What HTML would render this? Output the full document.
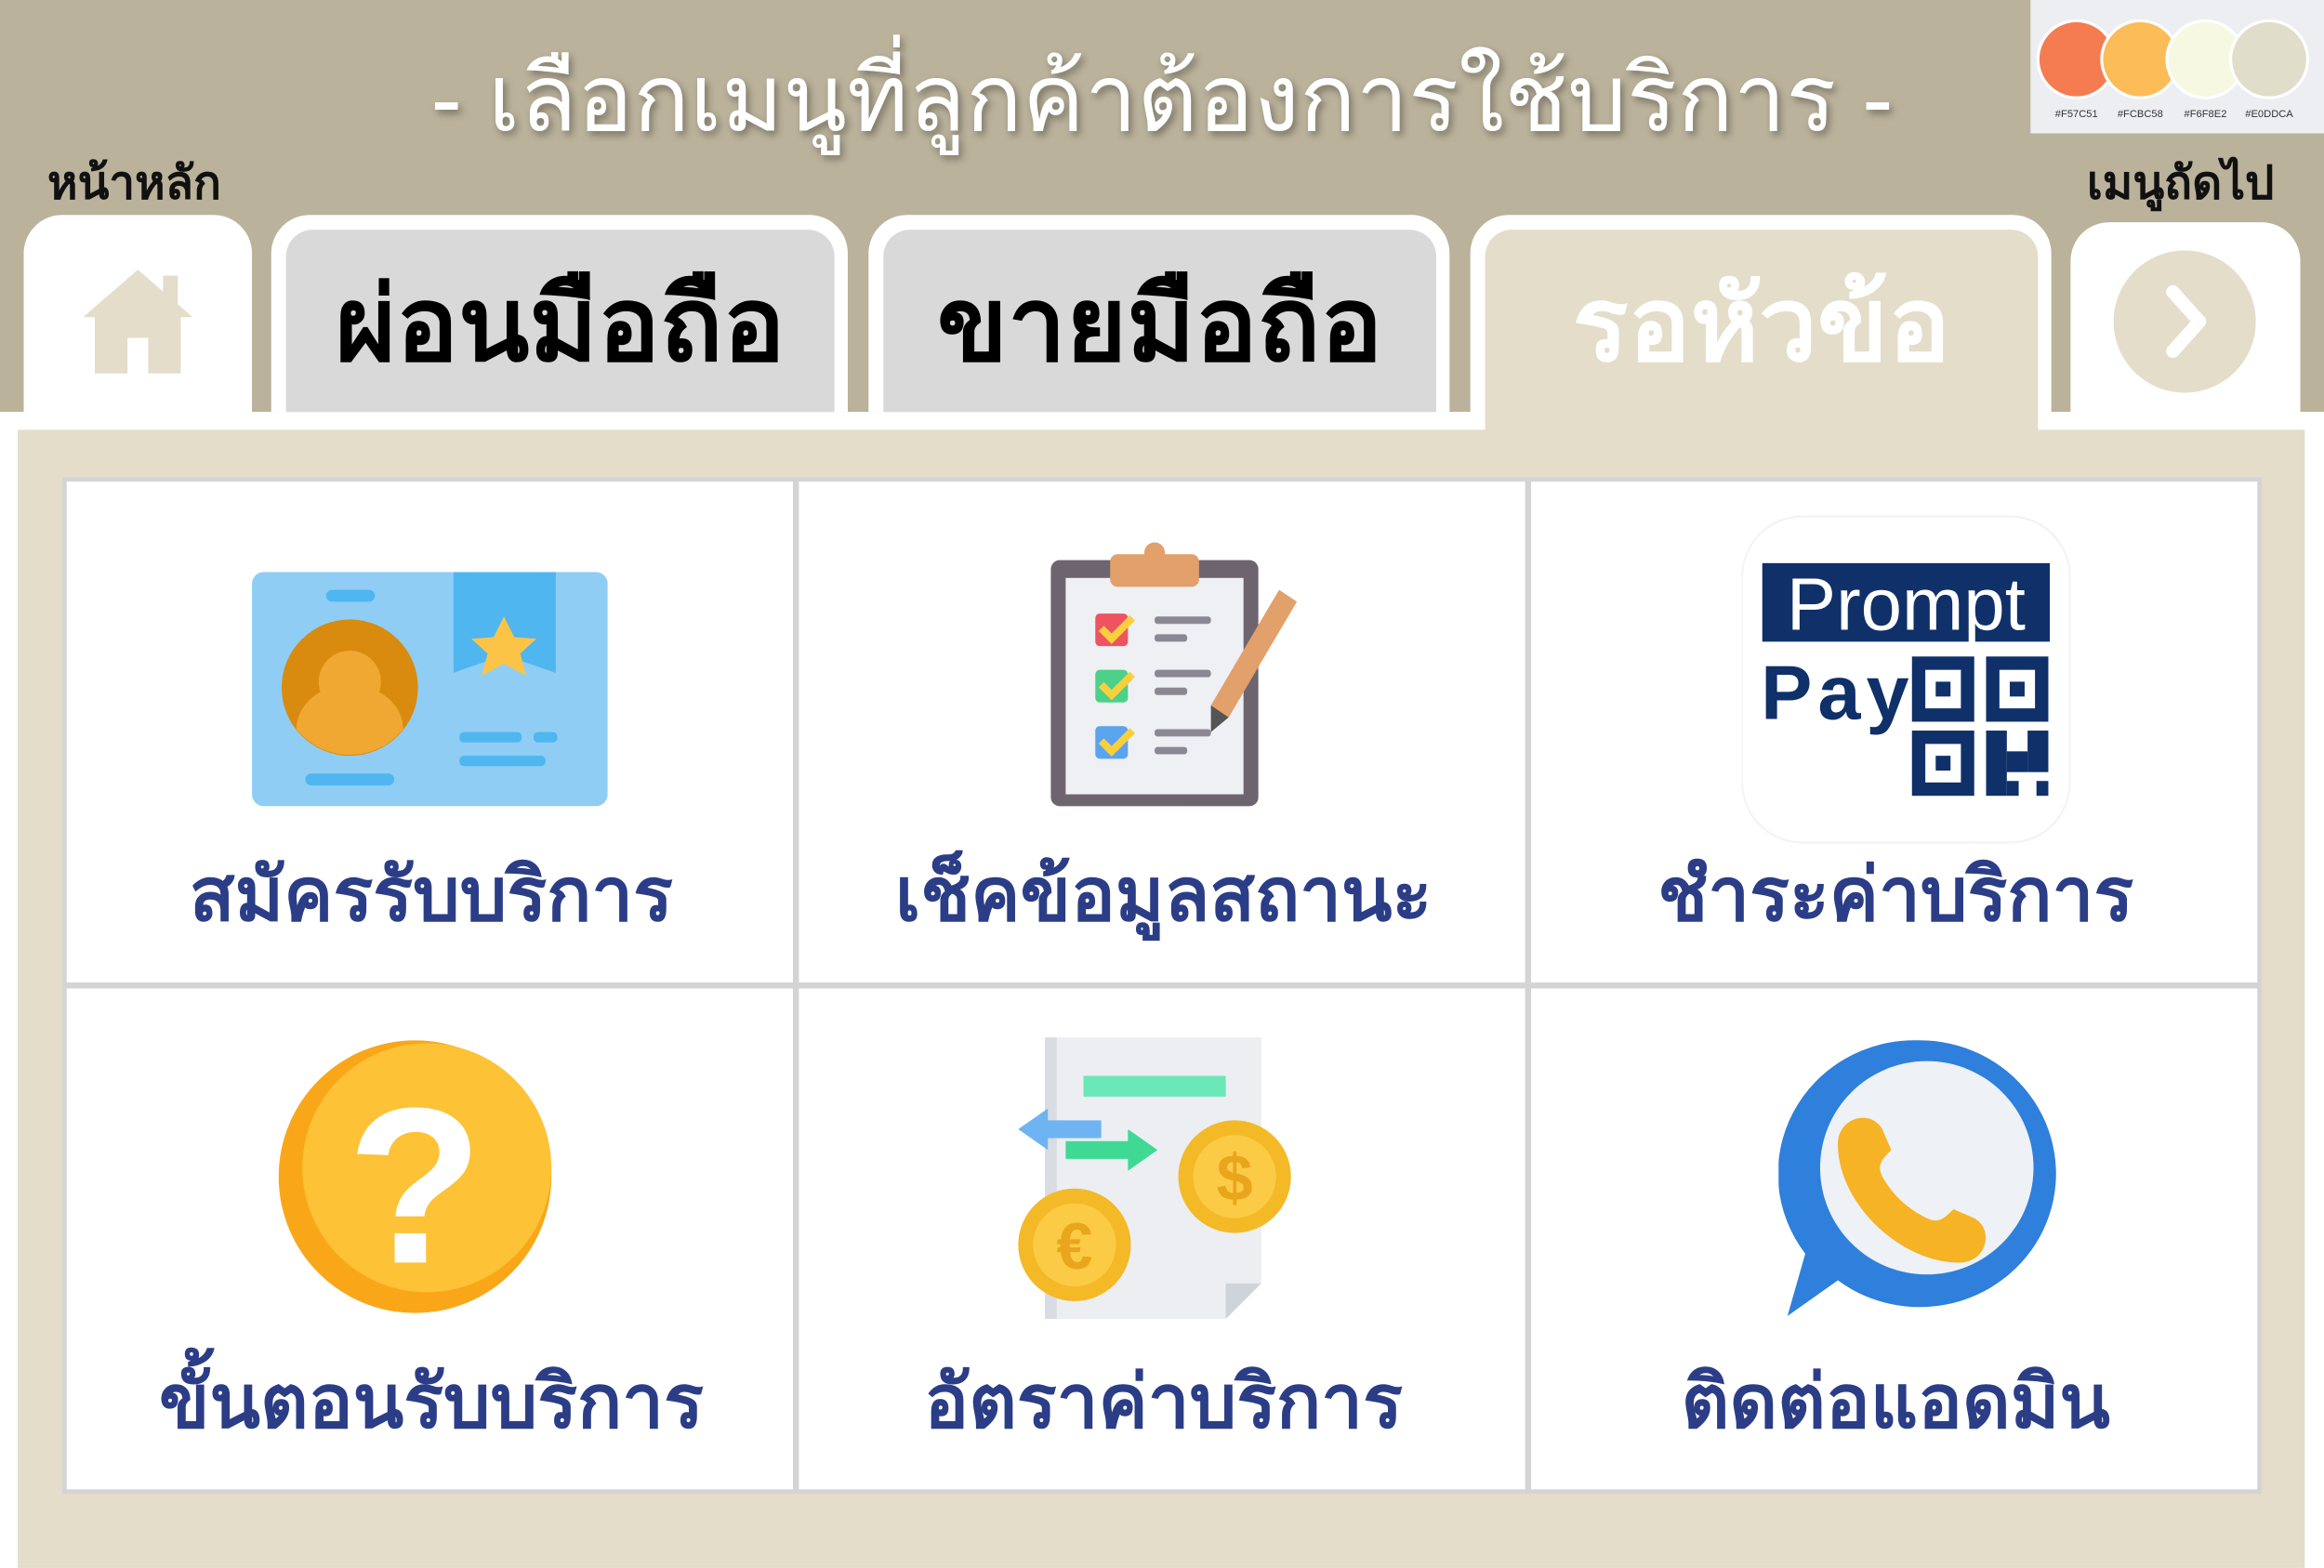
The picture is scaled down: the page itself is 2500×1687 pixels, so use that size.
<!DOCTYPE html>
<html><head><meta charset="utf-8"><style>
html,body{margin:0;padding:0;width:2500px;height:1686px;overflow:hidden;background:#fff}
#s{position:absolute;left:0;top:0;width:1568px;height:1058px;transform-origin:0 0;transform:scale(1.5944);font-family:"Liberation Sans","DejaVu Sans",sans-serif}
.a{position:absolute}
.lbl{position:absolute;font-weight:bold;color:#2b3d86;font-size:50px;text-align:center;width:494px}
.tab{font-size:70px;font-weight:bold;text-align:center;line-height:128px}
</style></head><body><div id="s">
<div class="a" style="left:0;top:0;width:1568px;height:278px;background:#bab29b"></div>
<div class="a" style="left:0;top:278px;width:1568px;height:780px;background:#fff"></div>
<div class="a" style="left:0;top:16px;width:1568px;text-align:center;font-size:63px;color:#fff;text-shadow:2px 3px 5px rgba(0,0,0,.35)">- เลือกเมนูที่ลูกค้าต้องการใช้บริการ -</div>
<div class="a" style="left:1370px;top:0;width:198px;height:90px;background:#eceef2"></div>
<svg class="a" style="left:1370px;top:0" width="198" height="90">
<circle cx="31" cy="40" r="26" fill="#F57C51" stroke="#fff" stroke-width="2"/>
<circle cx="74" cy="40" r="26" fill="#FCBC58" stroke="#fff" stroke-width="2"/>
<circle cx="118" cy="40" r="26" fill="#F6F8E2" stroke="#fff" stroke-width="2"/>
<circle cx="161" cy="40" r="26" fill="#E0DDCA" stroke="#fff" stroke-width="2"/>
<g font-size="7" fill="#333" font-family="Liberation Sans" text-anchor="middle"><text x="31" y="79">#F57C51</text><text x="74" y="79">#FCBC58</text><text x="118" y="79">#F6F8E2</text><text x="161" y="79">#E0DDCA</text></g>
</svg>
<div class="a" style="left:32px;top:98px;font-size:31px;font-weight:bold;color:#111">หน้าหลัก</div>
<div class="a" style="left:1408px;top:98px;font-size:31px;font-weight:bold;color:#111">เมนูถัดไป</div>
<div class="a" style="left:16px;top:145px;width:154px;height:145px;background:#fff;border-radius:26px 26px 0 0"></div>
<svg class="a" style="left:52px;top:178px" width="82" height="76" viewBox="0 0 82 76"><path d="M41 4 L4 36 L12 36 L12 74 L34 74 L34 50 L48 50 L48 74 L70 74 L70 36 L78 36 Z" fill="#e3ddca"/><rect x="58" y="8" width="10" height="20" fill="#e3ddca"/></svg>
<div class="a" style="left:183px;top:145px;width:389px;height:133px;background:#fff;border-radius:26px 26px 0 0"></div>
<div class="a tab" style="left:193px;top:155px;width:370px;height:123px;background:#d9d9d9;border-radius:18px 18px 0 0;color:#000">ผ่อนมือถือ</div>
<div class="a" style="left:586px;top:145px;width:392px;height:133px;background:#fff;border-radius:26px 26px 0 0"></div>
<div class="a tab" style="left:596px;top:155px;width:373px;height:123px;background:#d9d9d9;border-radius:18px 18px 0 0;color:#000">ขายมือถือ</div>
<div class="a" style="left:992px;top:145px;width:392px;height:145px;background:#fff;border-radius:26px 26px 0 0"></div>
<div class="a tab" style="left:1002px;top:155px;width:373px;height:140px;background:#e3ddca;border-radius:18px 18px 0 0;color:#fff">รอหัวข้อ</div>
<div class="a" style="left:1397px;top:150px;width:155px;height:140px;background:#fff;border-radius:26px 26px 0 0"></div>
<svg class="a" style="left:1426px;top:169px" width="96" height="96"><circle cx="48" cy="48" r="48" fill="#e3ddca"/><path d="M40 28 L58 48 L40 68" stroke="#fff" stroke-width="9" fill="none" stroke-linecap="round" stroke-linejoin="round"/></svg>
<div class="a" style="left:12px;top:290px;width:1543px;height:768px;background:#e3ddca"></div>
<div class="a" style="left:42px;top:322px;width:1484px;height:686px;background:#d4d4d4"></div>
<div class="a" style="left:45px;top:325px;width:490px;height:338px;background:#fff"></div>
<div class="a" style="left:539px;top:325px;width:490px;height:338px;background:#fff"></div>
<div class="a" style="left:1033px;top:325px;width:490px;height:338px;background:#fff"></div>
<div class="a" style="left:45px;top:667px;width:490px;height:338px;background:#fff"></div>
<div class="a" style="left:539px;top:667px;width:490px;height:338px;background:#fff"></div>
<div class="a" style="left:1033px;top:667px;width:490px;height:338px;background:#fff"></div>
<svg class="a" style="left:170px;top:386px" width="240" height="158"><rect width="240" height="158" rx="8" fill="#8fcdf5"/><path d="M136 0 H205 V68 L170 56 L136 68 Z" fill="#4fb6ef"/><path d="M170 30 l7 14 15 1 -11 10 4 15 -15 -8 -15 8 4 -15 -11 -10 15 -1z" fill="#fbc447"/><rect x="50" y="12" width="33" height="8" rx="4" fill="#4fb6ef"/><circle cx="66" cy="78" r="46" fill="#d88b0e"/><circle cx="66" cy="74" r="21" fill="#f0a832"/><path d="M30 106 a36 30 0 0 1 72 0 a46 46 0 0 1 -72 0z" fill="#f0a832"/><rect x="36" y="136" width="60" height="8" rx="4" fill="#4fb6ef"/><rect x="140" y="108" width="42" height="7" rx="3" fill="#4fb6ef"/><rect x="190" y="108" width="16" height="7" rx="3" fill="#4fb6ef"/><rect x="140" y="124" width="58" height="7" rx="3" fill="#4fb6ef"/></svg>
<svg class="a" style="left:705px;top:364px" width="175" height="182"><rect x="4" y="14" width="140" height="166" rx="6" fill="#6e6470"/><rect x="14" y="26" width="120" height="146" fill="#eef0f3"/><rect x="44" y="10" width="60" height="22" rx="5" fill="#e2a06a"/><circle cx="74" cy="9" r="7" fill="#e2a06a"/><rect x="34" y="50" width="22" height="22" rx="3" fill="#ee5460"/><rect x="34" y="88" width="22" height="22" rx="3" fill="#4cd08a"/><rect x="34" y="126" width="22" height="22" rx="3" fill="#5aa3ef"/><path d="M38 60 l7 7 14 -14 M38 98 l7 7 14 -14 M38 136 l7 7 14 -14" stroke="#f8cf3c" stroke-width="5" fill="none"/><g fill="#8b8893"><rect x="74" y="52" width="38" height="5" rx="2"/><rect x="74" y="64" width="22" height="5" rx="2"/><rect x="74" y="88" width="38" height="5" rx="2"/><rect x="74" y="100" width="22" height="5" rx="2"/><rect x="74" y="128" width="38" height="5" rx="2"/><rect x="74" y="140" width="22" height="5" rx="2"/></g><path d="M158 34 l12 8 -46 78 -12 -8z" fill="#e2a06a"/><path d="M112 112 l12 8 -12 10z" fill="#555"/></svg>
<div class="a" style="left:1176px;top:349px;width:220px;height:219px;background:#fff;border-radius:40px;box-shadow:0 0 2px #ddd"></div>
<svg class="a" style="left:1176px;top:349px" width="220" height="219"><rect x="13" y="31" width="194" height="53" fill="#0f3069"/><text x="110" y="76" text-anchor="middle" font-size="50" fill="#fff" font-family="Liberation Sans">Prompt</text><text x="12" y="136" font-size="52" font-weight="bold" fill="#0f3069" font-family="Liberation Sans" textLength="100">Pay</text><g fill="none" stroke="#0f3069" stroke-width="9"><rect x="118.5" y="98.5" width="33" height="35"/><rect x="168.5" y="98.5" width="33" height="35"/><rect x="118.5" y="148.5" width="33" height="35"/></g><g fill="#0f3069"><rect x="130" y="111" width="10" height="10"/><rect x="180" y="111" width="10" height="10"/><rect x="130" y="161" width="10" height="10"/><rect x="164" y="144" width="14" height="44"/><rect x="178" y="158" width="14" height="14"/><rect x="192" y="144" width="14" height="28"/><rect x="178" y="178" width="8" height="10"/><rect x="198" y="178" width="8" height="10"/></g></svg>
<svg class="a" style="left:184px;top:702px" width="192" height="190"><circle cx="96" cy="92" r="92" fill="#f9a719"/><circle cx="104" cy="86" r="84" fill="#fdc236"/><text x="96" y="150" text-anchor="middle" font-size="150" font-weight="bold" fill="#fff" font-family="Liberation Sans">?</text></svg>
<svg class="a" style="left:685px;top:700px" width="190" height="192"><path d="M20 0 H166 V166 L142 190 H20 Z" fill="#eceef2"/><path d="M142 190 V166 H166Z" fill="#cfd3da"/><rect x="20" y="0" width="8" height="190" fill="#d9dce2"/><rect x="46" y="26" width="96" height="14" fill="#6ae8b8"/><path d="M2 62 L22 48 V56 H58 V68 H22 V76Z" fill="#6fb4f2"/><path d="M96 76 L76 62 V70 H34 V82 H76 V90Z" fill="#3fd995"/><circle cx="148" cy="94" r="38" fill="#f4b926"/><circle cx="148" cy="94" r="28" fill="#fbcb45"/><text x="148" y="110" text-anchor="middle" font-size="44" font-weight="bold" fill="#e9a51c" font-family="Liberation Sans">$</text><circle cx="40" cy="140" r="38" fill="#f4b926"/><circle cx="40" cy="140" r="28" fill="#fbcb45"/><text x="40" y="156" text-anchor="middle" font-size="44" font-weight="bold" fill="#e9a51c" font-family="Liberation Sans">€</text></svg>
<svg class="a" style="left:1200px;top:700px" width="188" height="190"><path d="M94 2 A92 90 0 1 1 40 164 L6 188 L18 146 A92 90 0 0 1 94 2Z" fill="#2f7fdc"/><circle cx="100" cy="88" r="72" fill="#eef1f5"/><path d="M40 72 c0 -18 22 -24 30 -10 l6 14 c-6 6 -10 10 -6 18 c8 14 18 22 30 28 c8 4 12 0 18 -6 l14 6 c14 8 8 30 -10 30 c-40 0 -82 -40 -82 -80z" fill="#f5b325"/></svg>
<div class="lbl" style="left:44px;top:565px">สมัครรับบริการ</div>
<div class="lbl" style="left:538px;top:565px">เช็คข้อมูลสถานะ</div>
<div class="lbl" style="left:1032px;top:565px">ชำระค่าบริการ</div>
<div class="lbl" style="left:44px;top:907px">ขั้นตอนรับบริการ</div>
<div class="lbl" style="left:538px;top:907px">อัตราค่าบริการ</div>
<div class="lbl" style="left:1032px;top:907px">ติดต่อแอดมิน</div>
</div></body></html>
